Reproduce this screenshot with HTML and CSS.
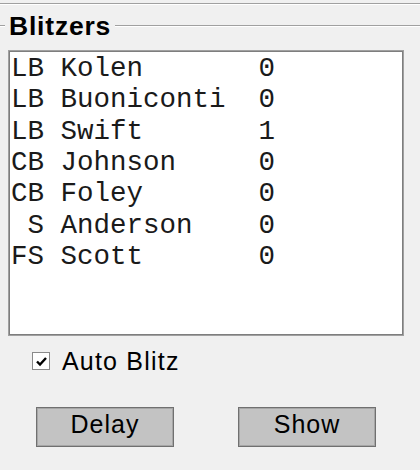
FILE: index.html
```html
<!DOCTYPE html>
<html>
<head>
<meta charset="utf-8">
<link rel="stylesheet" href="styles.css">
</head>
<body>
<div class="frame-top"></div>
<section class="group">
  <div class="group-head">
    <span class="rule rule-short"></span>
    <span class="legend">Blitzers</span>
    <span class="rule rule-long"></span>
  </div>
  <ul class="listbox">
    <li>LB Kolen       0</li>
    <li>LB Buoniconti  0</li>
    <li>LB Swift       1</li>
    <li>CB Johnson     0</li>
    <li>CB Foley       0</li>
    <li> S Anderson    0</li>
    <li>FS Scott       0</li>
  </ul>
  <label class="check-row">
    <span class="checkbox">
      <svg width="15" height="15" viewBox="0 0 15 15"><path d="M3 7.5 L6 10.5 L12 4" fill="none" stroke="#000" stroke-width="2.4"/></svg>
    </span>
    <span class="check-label">Auto Blitz</span>
  </label>
  <div class="buttons">
    <button class="btn">Delay</button>
    <button class="btn">Show</button>
  </div>
</section>
</body>
</html>
```
FILE: styles.css
```css
html, body {
  margin: 0;
  padding: 0;
  background: #f0f0f0;
  overflow: hidden;
}
body {
  width: 420px;
  height: 470px;
  font-family: "Liberation Sans", Arial, sans-serif;
  color: #000;
}
.frame-top {
  margin-top: 3px;
  border-top: 1px solid #a0a0a0;
  border-bottom: 1px solid #ffffff;
}
.group-head {
  margin-top: 6px;
  height: 30px;
  display: flex;
  align-items: center;
}
.rule {
  height: 0;
  border-top: 1px solid #a0a0a0;
  border-bottom: 1px solid #ffffff;
}
.rule-short {
  width: 5px;
  flex: none;
}
.rule-long {
  flex: 1;
}
.legend {
  font-weight: bold;
  font-size: 26.5px;
  line-height: 30px;
  letter-spacing: 0.8px;
  padding: 0 4px 0 4px;
}
.listbox {
  list-style: none;
  margin: 9px 0 0 8px;
  width: 396px;
  height: 286px;
  box-sizing: border-box;
  padding: 2px 0 0 2px;
  background: #fff;
  border: 1px solid #a0a0a0;
  box-shadow: inset 0 0 0 1px #7e7e7e;
  font-family: "Courier New", "Nimbus Mono PS", "Nimbus Mono L", "FreeMono", "Courier", "Liberation Mono", monospace;
  font-size: 27.5px;
  line-height: 31.33px;
  color: #1a1a1a;
}
.listbox li {
  white-space: pre;
}
.check-row {
  margin-top: 11px;
  height: 28px;
  display: flex;
  align-items: center;
  padding-left: 32px;
  gap: 12px;
}
.checkbox {
  width: 18px;
  height: 18px;
  box-sizing: border-box;
  border: 1px solid #8a8a8a;
  background: #fff;
  display: flex;
  align-items: center;
  justify-content: center;
}
.checkbox svg {
  display: block;
}
.check-label {
  font-size: 25px;
  line-height: 28px;
  letter-spacing: 1.2px;
}
.buttons {
  margin-top: 32px;
  display: flex;
  padding-left: 36px;
  gap: 64px;
}
.btn {
  width: 138px;
  height: 40px;
  box-sizing: border-box;
  padding: 0 0 5px 0;
  margin: 0;
  border: 1px solid #707070;
  box-shadow: inset 0 0 0 1px #a6a6a6;
  background: #c3c3c3;
  font-family: "Liberation Sans", Arial, sans-serif;
  font-size: 25px;
  line-height: 1;
  letter-spacing: 1px;
  color: #000;
  display: flex;
  align-items: center;
  justify-content: center;
}
```
